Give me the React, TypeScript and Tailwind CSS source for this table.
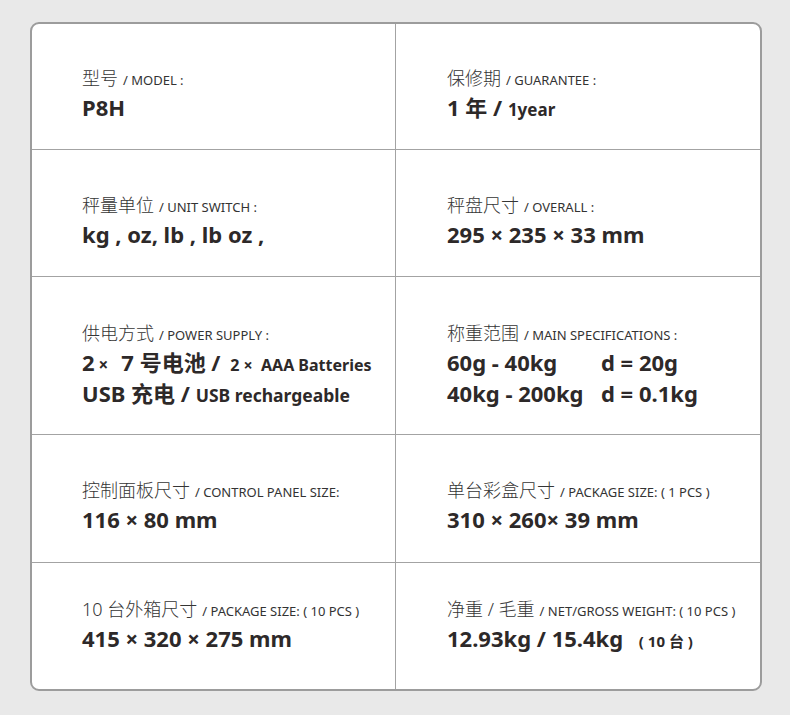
import type { ReactNode } from "react";

const labelFont = "font-['Noto_Sans','Noto_Sans_CJK_SC',sans-serif]";

function Label({ zh, en }: { zh: string; en: string }) {
  return (
    <p className="flex items-baseline leading-[24px] text-[#353535]">
      <span className="text-[18px] font-light">{zh}</span>
      <span className="ml-[5px] text-[13px] text-[#333]">{en}</span>
    </p>
  );
}

function Value({ children }: { children: ReactNode }) {
  return <p className="h-[31px] text-[22px] font-bold leading-[30px] text-[#2d2929]">{children}</p>;
}

function Cell({
  children,
  left,
  last,
  pt,
}: {
  children: ReactNode;
  left?: boolean;
  last?: boolean;
  pt: string;
}) {
  return (
    <div
      className={`flex flex-col ${pt} ${left ? "border-r border-[#a3a3a3] pl-[50px]" : "pl-[51px]"} ${
        last ? "" : "border-b border-[#a3a3a3]"
      }`}
    >
      {children}
    </div>
  );
}

export default function App() {
  return (
    <div className={`min-h-[715px] bg-[#e9e9e9] pt-[22px] pl-[30px] ${labelFont}`}>
      <div className="grid h-[669px] w-[732px] grid-cols-[364px_1fr] grid-rows-[126px_127px_158px_128px_1fr] overflow-hidden rounded-[9px] border-2 border-[#9c9c9c] bg-white">
        <Cell left pt="pt-[42px]">
          <Label zh="型号" en="/ MODEL :" />
          <Value>P8H</Value>
        </Cell>
        <Cell pt="pt-[42px]">
          <Label zh="保修期" en="/ GUARANTEE :" />
          <Value>
            1 年 / <span className="text-[17px] leading-none">1year</span>
          </Value>
        </Cell>

        <Cell left pt="pt-[43px]">
          <Label zh="秤量单位" en="/ UNIT SWITCH :" />
          <Value>kg , oz, lb , lb oz ,</Value>
        </Cell>
        <Cell pt="pt-[43px]">
          <Label zh="秤盘尺寸" en="/ OVERALL :" />
          <Value>295 × 235 × 33 mm</Value>
        </Cell>

        <Cell left pt="pt-[44px]">
          <Label zh="供电方式" en="/ POWER SUPPLY :" />
          <div>
            <Value>
              2<span className="ml-[4px] mr-[3px] text-[17px] leading-none">×</span>
              <span className="ml-[10px]">7 号电池 / </span>
              <span className="ml-[4px] text-[16px] leading-none">2 × &nbsp;AAA Batteries</span>
            </Value>
            <Value>
              USB 充电 / <span className="text-[17.5px] leading-none">USB rechargeable</span>
            </Value>
          </div>
        </Cell>
        <Cell pt="pt-[44px]">
          <Label zh="称重范围" en="/ MAIN SPECIFICATIONS :" />
          <div className="grid grid-cols-[154px_1fr]">
            <Value>60g - 40kg</Value>
            <Value>d = 20g</Value>
            <Value>40kg - 200kg</Value>
            <Value>d = 0.1kg</Value>
          </div>
        </Cell>

        <Cell left pt="pt-[43px]">
          <Label zh="控制面板尺寸" en="/ CONTROL PANEL SIZE:" />
          <Value>116 × 80 mm</Value>
        </Cell>
        <Cell pt="pt-[43px]">
          <Label zh="单台彩盒尺寸" en="/ PACKAGE SIZE: ( 1 PCS )" />
          <Value>310 × 260× 39 mm</Value>
        </Cell>

        <Cell left last pt="pt-[34px]">
          <Label zh="10 台外箱尺寸" en="/ PACKAGE SIZE: ( 10 PCS )" />
          <Value>415 × 320 × 275 mm</Value>
        </Cell>
        <Cell last pt="pt-[34px]">
          <Label zh="净重 / 毛重" en="/ NET/GROSS WEIGHT: ( 10 PCS )" />
          <Value>
            12.93kg / 15.4kg <span className="ml-[10px] text-[15px] leading-none">( 10 台 )</span>
          </Value>
        </Cell>
      </div>
    </div>
  );
}
